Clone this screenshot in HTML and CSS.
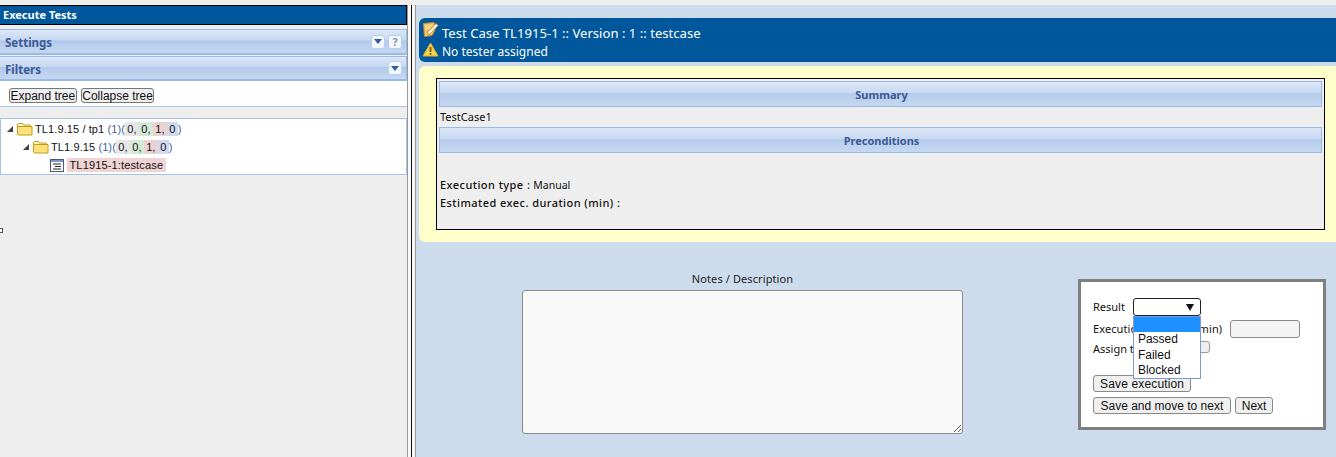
FILE: index.html
```html
<!DOCTYPE html>
<html lang="en">
<head>
<meta charset="utf-8">
<title>Execute Tests</title>
<link rel="stylesheet" href="styles.css">
</head>
<body>
<div class="page">
  <aside class="left">
    <div class="page-title">Execute Tests</div>
    <div class="panel-bar">
      <span>Settings</span>
      <span class="tools">
        <span class="tool"><svg width="8" height="5" viewBox="0 0 8 5"><path d="M0 0h8L4 5z" fill="#2f5ca8"/></svg></span>
        <span class="tool tool-help">?</span>
      </span>
    </div>
    <div class="panel-bar panel-bar-second">
      <span>Filters</span>
      <span class="tools">
        <span class="tool"><svg width="8" height="5" viewBox="0 0 8 5"><path d="M0 0h8L4 5z" fill="#2f5ca8"/></svg></span>
      </span>
    </div>
    <div class="tree-buttons">
      <button class="btn-tree" type="button">Expand tree</button>
      <button class="btn-tree" type="button">Collapse tree</button>
    </div>
    <div class="tree">
      <div class="tree-row">
        <svg class="expander" width="6" height="6" viewBox="0 0 6 6"><path d="M6 0v6H0z" fill="#444"/></svg>
        <svg class="folder" width="16" height="13" viewBox="0 0 16 13"><path d="M.5 3V1.500l1-1h4l1.500 1.500H13l.5 1V4" fill="#fff6b8" stroke="#c09a20"/><path d="M.5 3.500h14.500V12H1.500l-1-1z" fill="#ffe27a" stroke="#c09a20"/></svg>
        <span class="node">TL1.9.15 / tp1 <span class="blue">(1)(</span><span class="c c-g">0,</span><span class="c c-n">0,</span><span class="c c-r">1,</span><span class="c c-b">0</span><span class="blue">)</span></span>
      </div>
      <div class="tree-row tree-row-2">
        <svg class="expander" width="6" height="6" viewBox="0 0 6 6"><path d="M6 0v6H0z" fill="#444"/></svg>
        <svg class="folder" width="16" height="13" viewBox="0 0 16 13"><path d="M.5 3V1.500l1-1h4l1.500 1.500H13l.5 1V4" fill="#fff6b8" stroke="#c09a20"/><path d="M.5 3.500h14.500V12H1.500l-1-1z" fill="#ffe27a" stroke="#c09a20"/></svg>
        <span class="node">TL1.9.15 <span class="blue">(1)(</span><span class="c c-g">0,</span><span class="c c-n">0,</span><span class="c c-r">1,</span><span class="c c-b">0</span><span class="blue">)</span></span>
      </div>
      <div class="tree-row tree-row-3">
        <svg class="case-icon" width="14" height="13" viewBox="0 0 14 13"><rect x=".5" y=".5" width="13" height="12" fill="#fff" stroke="#47577c"/><rect x="1" y="1" width="12" height="2" fill="#7f95c4"/><path d="M3 5h8M5 7.500h6M3 10h8" stroke="#222"/></svg>
        <span class="leaf">TL1915-1:testcase</span>
      </div>
    </div>
    <span class="grip"></span>
  </aside>
  <div class="splitter"><span class="splitter-line"></span></div>
  <main class="right">
    <header class="case-head">
      <div class="case-line case-line-title">
        <svg class="head-icon head-icon-note" width="17" height="15" viewBox="0 0 17 15"><path d="M1.500 1.500l10.500-1 1 7.500-3 5.500-7.500 1z" fill="#f2c66a" stroke="#c98f2e"/><path d="M3 4.500l7-1M3 7l5-1" stroke="#fbe6b6"/><path d="M5 9l2 4 9-9.500-2-2-7 7.500z" fill="#fff" stroke="#c98f2e"/></svg>
        <span>Test Case TL1915-1 :: Version : 1 :: testcase</span>
      </div>
      <div class="case-line">
        <svg class="head-icon head-icon-warn" width="17" height="15" viewBox="0 0 17 15"><path d="M8.500 1L16 14H1z" fill="#f7d24c" stroke="#e9b12e" stroke-linejoin="round"/><path d="M8.500 5v5" stroke="#7d5b00" stroke-width="1.800"/><path d="M8.500 11v1.800" stroke="#7d5b00" stroke-width="1.800"/></svg>
        <span>No tester assigned</span>
      </div>
    </header>
    <section class="case-body">
      <div class="case-table">
        <div class="section-bar">Summary</div>
        <div class="summary-text">TestCase1</div>
        <div class="section-bar">Preconditions</div>
        <div class="meta meta-first"><b>Execution type :</b> <span class="meta-value">Manual</span></div>
        <div class="meta"><b>Estimated exec. duration (min) :</b></div>
      </div>
    </section>
    <section class="exec-row">
      <div class="notes">
        <label class="notes-label" for="notes">Notes / Description</label>
        <textarea class="notes-input" id="notes"></textarea>
      </div>
      <form class="result-box">
        <div class="form-row form-row-result">
          <span class="form-label">Result</span>
          <span class="select-wrap">
            <span class="select-box"><svg width="8" height="7" viewBox="0 0 8 7"><path d="M0 0h8L4 7z" fill="#111"/></svg></span>
            <ul class="select-list">
              <li class="is-selected">&nbsp;</li>
              <li>Passed</li>
              <li>Failed</li>
              <li>Blocked</li>
            </ul>
          </span>
        </div>
        <div class="form-row form-row-duration">
          <span class="form-label">Execution duration (min)</span>
          <input class="duration" type="text">
        </div>
        <div class="form-row form-row-assign">
          <span class="form-label">Assign to</span>
          <span class="assign-box"></span>
        </div>
        <div class="actions actions-first"><button class="btn btn-save" type="button">Save execution</button></div>
        <div class="actions"><button class="btn btn-move" type="button">Save and move to next</button><button class="btn btn-next" type="button">Next</button></div>
      </form>
    </section>
  </main>
</div>
</body>
</html>
```
FILE: styles.css
```css
html, body { margin: 0; height: 100%; overflow: hidden; }
body { background: #eeeeee; font-family: "Noto Sans", sans-serif; font-size: 12px; color: #111; }
.page { display: grid; grid-template-columns: 407px 9px 1fr; height: 457px; padding-top: 5px; box-sizing: border-box; }

.left { position: relative; min-width: 0; }
.page-title { height: 18px; line-height: 18px; background: #00579b; border: 1px solid #000; border-width: 1px 1px 1px 0; padding-left: 3px; color: #fff; font-weight: 700; font-size: 11px; margin-bottom: 4px; }
.panel-bar { height: 26px; box-sizing: border-box; display: flex; align-items: center; justify-content: space-between; padding: 0 4px 0 5px; border: 1px solid #99bbe8; border-width: 1px 1px 2px 0; background: linear-gradient(#dce7f7 0, #c5d7f0 45%, #b2c9ea 46%, #c6d8f1 100%); font-weight: 700; font-size: 11.5px; line-height: 24px; color: #3a5a96; }
.panel-bar > span:first-child { position: relative; top: 1px; }
.panel-bar-second { margin-top: 1px; height: 25px; }
.panel-bar-second > span:first-child { top: 2px; }
.tools { display: flex; gap: 3px; }
.tool { width: 14px; height: 14px; box-sizing: border-box; border: 1px solid #b9d0ef; border-radius: 3px; background: #f4f8fd; display: flex; align-items: center; justify-content: center; }
.tool-help { color: #7f93ad; font-weight: 700; font-size: 11px; line-height: 1; }
.tree-buttons { height: 26px; box-sizing: border-box; background: #fff; border-bottom: 1px solid #a9c3e8; padding: 7px 0 0 9px; display: flex; gap: 4px; align-items: flex-start; }
.btn-tree { font: 12px/12px "Liberation Sans", sans-serif; height: 15px; padding: 0 .5px; color: #111; background: #efefef; border: 1px solid #777; border-radius: 3px; }
.tree { margin-top: 11px; height: 57px; box-sizing: border-box; background: #fff; border: 1px solid #a9c3e8; padding-top: 1px; font: 11px/18px "Liberation Sans", sans-serif; color: #111; }
.tree-row { display: flex; align-items: center; height: 18px; padding-left: 6px; }
.tree-row-2 { padding-left: 22px; }
.tree-row-3 { padding-left: 49px; }
.expander { margin-right: 4px; }
.folder { margin-right: 2px; }
.case-icon { margin-right: 3px; }
.node { letter-spacing: .1px; }
.blue { color: #3a5fa8; }
.c { display: inline-block; padding: 0 2.400px; line-height: 14px; letter-spacing: 0; }
.c-g { background: #e6e6e6; }
.c-n { background: #d4ead6; }
.c-r { background: #ebd2d2; }
.c-b { background: #d2d8ee; }
.leaf { background: #f0d3d3; padding: 0 2.500px; height: 14px; line-height: 14px; letter-spacing: .15px; }
.grip { position: absolute; left: 0; top: 223px; width: 2px; height: 3px; border: 1px solid #555; border-left: 0; background: #fff; }

.splitter { display: flex; justify-content: center; background: #f7f7f7; border-left: 1px solid #999; border-right: 1px solid #999; box-sizing: border-box; }
.splitter-line { width: 1px; height: 100%; background: #111; }

.right { background: #cddced; padding: 13px 0 0 3px; min-width: 0; overflow: hidden; }
.case-head { height: 44px; background: #00579b; border-radius: 6px 0 0 6px; color: #fff; font-size: 12px; padding: 5px 0 0 3px; box-sizing: border-box; }
.case-line { height: 19px; display: flex; align-items: center; gap: 3px; }
.case-line-title { font-size: 13.100px; }
.head-icon { flex: none; }
.head-icon-note { margin-top: -7px; }
.head-icon-warn { margin-top: -4px; }
.case-body { margin-top: 4px; height: 176px; box-sizing: border-box; background: #ffffcc; border-radius: 6px 0 0 6px; padding: 12px 11px 0 17px; }
.case-table { height: 152px; box-sizing: border-box; border: 1px solid #000; background: #eeeeee; padding: 2px; font-size: 11px; }
.section-bar { height: 26px; box-sizing: border-box; border: 1px solid #99bbe8; background: linear-gradient(#dce7f7 0, #c8d9f1 45%, #b4cbeb 46%, #c6d8f1 100%); text-align: center; font-weight: 700; color: #3a5a96; line-height: 26px; padding-left: 2px; }
.summary-text { height: 20px; line-height: 20px; padding-left: 1px; }
.meta { height: 18px; line-height: 18px; padding-left: 1px; }
.meta b { font-weight: 500; letter-spacing: .45px; }
.meta-value { font-size: 10.500px; }
.meta-first { margin-top: 23px; }

.exec-row { display: flex; align-items: flex-start; padding-top: 31px; }
.notes { margin-left: 103px; width: 441px; display: flex; flex-direction: column; align-items: center; }
.notes-label { height: 11px; line-height: 11px; font-size: 11px; margin-bottom: 6px; color: #222; letter-spacing: .1px; }
.notes-input { width: 441px; height: 144px; box-sizing: border-box; margin: 0; background: #f8f8f8; border: 1px solid #8a8a8a; border-radius: 3px; display: block; }
.result-box { margin-left: 115px; margin-top: 6px; width: 248px; height: 151px; box-sizing: border-box; border: 3px solid #7f7f7f; background: #fff; padding: 16px 0 0 12px; font-size: 11px; position: relative; }
.form-row { display: flex; align-items: center; }
.form-row-result { height: 18px; }
.form-label { white-space: nowrap; position: relative; top: -1px; }
.select-wrap { position: relative; margin-left: 8px; }
.select-box { width: 68px; height: 18px; box-sizing: border-box; border: 1px solid #222; border-radius: 3px; background: #fff; display: flex; align-items: center; justify-content: flex-end; padding-right: 6px; }
.select-list { position: absolute; left: 0; top: 18px; width: 68px; box-sizing: border-box; margin: 0; padding: 0; list-style: none; background: #fff; border: 1px solid #7d9bcf; font: 12px/15.300px "Liberation Sans", sans-serif; z-index: 2; color: #111; }
.select-list li { height: 15.300px; padding-left: 4px; }
.select-list .is-selected { background: #1e90ff; }
.form-row-duration { margin-top: 3px; height: 20px; }
.form-row-duration .form-label { letter-spacing: .1px; }
.duration { width: 70px; height: 18px; box-sizing: border-box; margin: 0 0 0 8px; background: #f4f4f4; border: 1px solid #8a8a8a; border-radius: 3px; }
.form-row-assign { margin-top: 1px; height: 18px; }
.assign-box { width: 50px; height: 12px; box-sizing: border-box; margin: -4px 0 0 20px; background: #efefef; border: 1px solid #999; border-radius: 3px; }
.actions { display: flex; gap: 4px; }
.actions-first { margin-top: 17px; height: 22px; }
.btn { font: 12px/14px "Liberation Sans", sans-serif; height: 17px; padding: 0 6px; color: #111; background: #efefef; border: 1px solid #8a8a8a; border-radius: 3px; }
.btn-save { letter-spacing: .15px; }
.btn-move { padding: 0 6.500px; }
```
